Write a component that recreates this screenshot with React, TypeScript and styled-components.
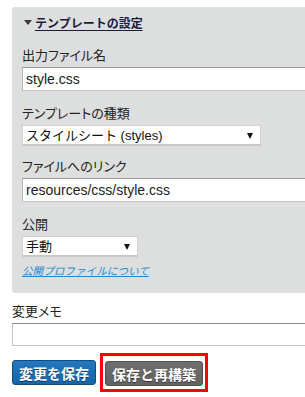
import styled, { createGlobalStyle } from "styled-components"

const GlobalStyle = createGlobalStyle`
    html, body {
        margin: 0;
        padding: 0;
        background: #ffffff;
        overflow: hidden;
    }
    body {
        font-family: "Liberation Sans", "Noto Sans CJK JP", sans-serif;
        color: #222;
    }
`;

const Page = styled.div`
    padding: 7px 0 0 12px;
    width: 293px;
    overflow: hidden;
`;

const Panel = styled.section`
    background: #dddfde;
    border-radius: 3px 0 0 3px;
    padding: 6px 0 14px 10px;
`;

const Heading = styled.h2`
    margin: 0;
    display: flex;
    align-items: center;
    gap: 3px;
    height: 18px;
    font-size: 12px;
    font-weight: bold;
    font-family: "Noto Sans CJK JP", sans-serif;
    color: #1c1c40;
`;

const Caret = styled.span`
    width: 0;
    height: 0;
    margin-left: 2px;
    border-left: 4px solid transparent;
    border-right: 4px solid transparent;
    border-top: 5px solid #3a3a3a;
`;

const HeadingText = styled.span`
    text-decoration: underline;
    text-underline-offset: 2px;
`;

const Field = styled.div<{ $top: number }>`
    margin-top: ${(p) => p.$top}px;
`;

const Label = styled.div`
    font-family: "Noto Sans CJK JP", sans-serif;
    font-feature-settings: "palt";
    font-size: 13px;
    line-height: 16px;
    color: #222;
    margin-bottom: 4px;
`;

const TextInput = styled.input`
    display: block;
    box-sizing: border-box;
    width: 300px;
    height: 24px;
    margin: 0;
    padding: 0 3px;
    border: 1px solid #c4c4c4;
    border-top-color: #9a9a9a;
    border-left-color: #b4b4b4;
    background: #fff;
    font-family: "Liberation Sans", "Noto Sans CJK JP", sans-serif;
    font-size: 14px;
    color: #222;
    outline: none;
`;

const SelectWrap = styled.div<{ $width: number }>`
    position: relative;
    width: ${(p) => p.$width}px;
`;

const Select = styled.select`
    display: block;
    box-sizing: border-box;
    width: 100%;
    height: 21px;
    margin: 0;
    padding: 0 3px;
    appearance: none;
    border: 1px solid #d2d2d2;
    border-bottom: 2px solid #c8c8c8;
    border-radius: 0;
    background: #fff;
    font-family: "Liberation Sans", "Noto Sans CJK JP", sans-serif;
    font-size: 13px;
    color: #111;
    outline: none;
`;

const Arrow = styled.span`
    position: absolute;
    right: 8px;
    top: 8px;
    width: 0;
    height: 0;
    border-left: 3.5px solid transparent;
    border-right: 3.5px solid transparent;
    border-top: 6px solid #111;
    pointer-events: none;
`;

const HelpLink = styled.a`
    display: block;
    margin-top: 6px;
    font-family: "Noto Sans CJK JP", sans-serif;
    font-size: 10.6px;
    line-height: 16px;
    font-style: italic;
    color: #1d8bd1;
    text-decoration: underline;
`;

const Memo = styled.div`
    margin-top: 10px;
`;

const MemoInput = styled(TextInput)`
    height: 23px;
    border-color: #c6c6c6;
    border-top-color: #8a8a8a;
`;

const ButtonRow = styled.div`
    display: flex;
    align-items: center;
    gap: 4px;
    margin-top: 7px;
`;

const Button = styled.button<{ $tone: "blue" | "gray" }>`
    box-sizing: border-box;
    height: 25px;
    padding: 0 6px;
    border-radius: 3px;
    border: 1px solid ${(p) => (p.$tone === "blue" ? "#0f4f86" : "#4f4f4f")};
    background: ${(p) =>
        p.$tone === "blue"
            ? "linear-gradient(#2377bd, #1566a8)"
            : "linear-gradient(#6f6f6f, #616161)"};
    color: #fff;
    font-family: "Noto Sans CJK JP", sans-serif;
    font-size: 14px;
    font-weight: bold;
    line-height: 22px;
    text-shadow: 0 1px 0 rgba(0, 0, 0, 0.45);
    cursor: pointer;
`;

const Highlight = styled.span`
    display: inline-flex;
    border: 3px solid #ff0000;
    padding: 5px 2px 3px 2px;
`;

function App() {
    return (
        <Page>
            <GlobalStyle />
            <Panel>
                <Heading>
                    <Caret />
                    <HeadingText>テンプレートの設定</HeadingText>
                </Heading>
                <Field $top={16}>
                    <Label>出力ファイル名</Label>
                    <TextInput defaultValue="style.css" />
                </Field>
                <Field $top={14}>
                    <Label>テンプレートの種類</Label>
                    <SelectWrap $width={239}>
                        <Select defaultValue="styles">
                            <option value="styles">スタイルシート (styles)</option>
                        </Select>
                        <Arrow />
                    </SelectWrap>
                </Field>
                <Field $top={12}>
                    <Label>ファイルへのリンク</Label>
                    <TextInput defaultValue="resources/css/style.css" />
                </Field>
                <Field $top={14}>
                    <Label>公開</Label>
                    <SelectWrap $width={116}>
                        <Select defaultValue="manual">
                            <option value="manual">手動</option>
                        </Select>
                        <Arrow />
                    </SelectWrap>
                </Field>
                <HelpLink href="#">公開プロファイルについて</HelpLink>
            </Panel>
            <Memo>
                <Label>変更メモ</Label>
                <MemoInput />
            </Memo>
            <ButtonRow>
                <Button $tone="blue">変更を保存</Button>
                <Highlight>
                    <Button $tone="gray">保存と再構築</Button>
                </Highlight>
            </ButtonRow>
        </Page>
    );
}

export default App
